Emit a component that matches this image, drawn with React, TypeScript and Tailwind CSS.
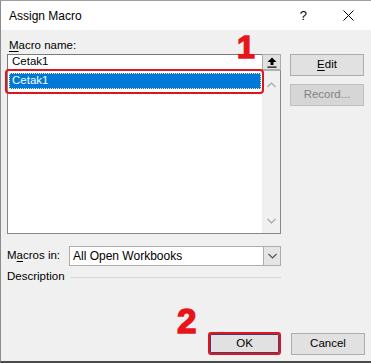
import React from 'react';

const font = { fontFamily: '"Liberation Sans", Arial, sans-serif' };

function UploadIcon() {
  return (
    <svg width="10" height="11" viewBox="0 0 10 11">
      <path d="M5 0.5 L9.5 5 L6.5 5 L6.5 8 L3.5 8 L3.5 5 L0.5 5 Z" fill="#000" />
      <rect x="0.5" y="9.5" width="9" height="1.2" fill="#000" />
    </svg>
  );
}

function Chevron({ up = false, color = '#a6a6a6' }: { up?: boolean; color?: string }) {
  return (
    <svg width="9" height="6" viewBox="0 0 9 6">
      <path d={up ? 'M0.5 5 L4.5 1 L8.5 5' : 'M0.5 1 L4.5 5 L8.5 1'} fill="none" stroke={color} strokeWidth="1.2" />
    </svg>
  );
}

export default function App() {
  return (
    <div
      className="relative w-[371px] h-[363px] flex flex-col border-t border-l border-b-2 border-t-[#a0a0a0] border-l-[#8c8c8c] border-b-[#4a4a4a] bg-[#f0f0f0] text-[#000] overflow-hidden"
      style={font}
    >
      {/* title bar */}
      <div className="h-[29px] bg-white flex items-center shrink-0">
        <span className="pl-[8px] text-[12px] leading-none">Assign Macro</span>
        <span className="ml-auto text-[13px] leading-none mr-[36px]">?</span>
        <svg width="11" height="11" viewBox="0 0 11 11" className="mr-[17px]">
          <path d="M0.5 0.5 L10.5 10.5 M10.5 0.5 L0.5 10.5" stroke="#000" strokeWidth="1" />
        </svg>
      </div>

      {/* body */}
      <div className="flex-1 flex flex-col px-[6px] pt-[8px] pb-[6px] text-[11.5px]">
        <div className="flex">
          <div className="w-[274px] flex flex-col">
            <div className="h-[14px] leading-[14px] pl-[2px]">
              <span className="underline underline-offset-2">M</span>acro name:
            </div>
            <div className="mt-[2px] h-[16px] flex">
              <div className="flex-1 bg-white border border-[#7a7a7a] border-r-0 flex items-center pl-[4px] leading-none">
                Cetak1
              </div>
              <div className="w-[19px] border border-[#adadad] bg-[#e1e1e1] flex items-center justify-center">
                <UploadIcon />
              </div>
            </div>
            <div className="h-[164px] bg-white border border-[#828790] border-t-[#b0b0b0] flex">
              <div className="flex-1 pt-[2px] pl-[1px] pr-[1px]">
                <div className="h-[16px] bg-[#0078d7] text-white border border-dotted border-[#f5e6a0] flex items-center pl-[2px] leading-none">
                  Cetak1
                </div>
              </div>
              <div className="w-[18px] bg-[#f0f0f0] flex flex-col items-center justify-between pt-[11px] pb-[9px]">
                <Chevron up />
                <Chevron />
              </div>
            </div>
            <div className="mt-[12px] h-[20px] flex items-center">
              <div className="w-[62px] leading-none">
                M<span className="underline underline-offset-2">a</span>cros in:
              </div>
              <div className="flex-1 h-full flex border border-[#adadad] bg-white">
                <div className="flex-1 flex items-center pl-[3px] text-[12px] leading-none">All Open Workbooks</div>
                <div className="w-[17px] bg-[#e5e5e5] border-l border-[#adadad] flex items-center justify-center">
                  <Chevron color="#555" />
                </div>
              </div>
            </div>
            <div className="mt-[5px] h-[12px] flex items-center">
              <span className="leading-none">Description</span>
              <div className="flex-1 ml-[6px] h-px bg-[#d5d5d5]" />
            </div>
          </div>

          <div className="ml-[9px] w-[74px] flex flex-col pt-[16px]">
            <div className="h-[22px] border border-[#adadad] bg-[#e1e1e1] flex items-center justify-center leading-none">
              <span className="underline underline-offset-2">E</span>dit
            </div>
            <div className="mt-[8px] h-[22px] border border-[#bfbfbf] bg-[#d6d6d6] flex items-center justify-center leading-none text-[#838383]">
              Record...
            </div>
          </div>
        </div>

        <div className="mt-auto flex justify-end gap-[10px]">
          <div className="w-[73px] h-[23px] border-2 border-[#e0161f] rounded-[3px] shadow-[inset_0_0_0_1px_#4d3b6b] bg-[#e1e1e1] flex items-center justify-center leading-none">
            OK
          </div>
          <div className="w-[74px] h-[22px] mt-[1px] border border-[#adadad] bg-[#e1e1e1] flex items-center justify-center leading-none">
            Cancel
          </div>
        </div>
      </div>

      {/* annotations */}
      <div className="absolute left-[4px] top-[68px] w-[259px] h-[25px] border-2 border-[#e0161f] rounded-[4px]" />
      <div className="absolute left-[236px] top-[30px] text-[32px] font-bold leading-none text-[#e8141c] [-webkit-text-stroke:1.5px_#e8141c]">1</div>
      <div className="absolute left-[176px] top-[302px] text-[35px] font-bold leading-none text-[#e8141c] [-webkit-text-stroke:1.5px_#e8141c]">2</div>
    </div>
  );
}
